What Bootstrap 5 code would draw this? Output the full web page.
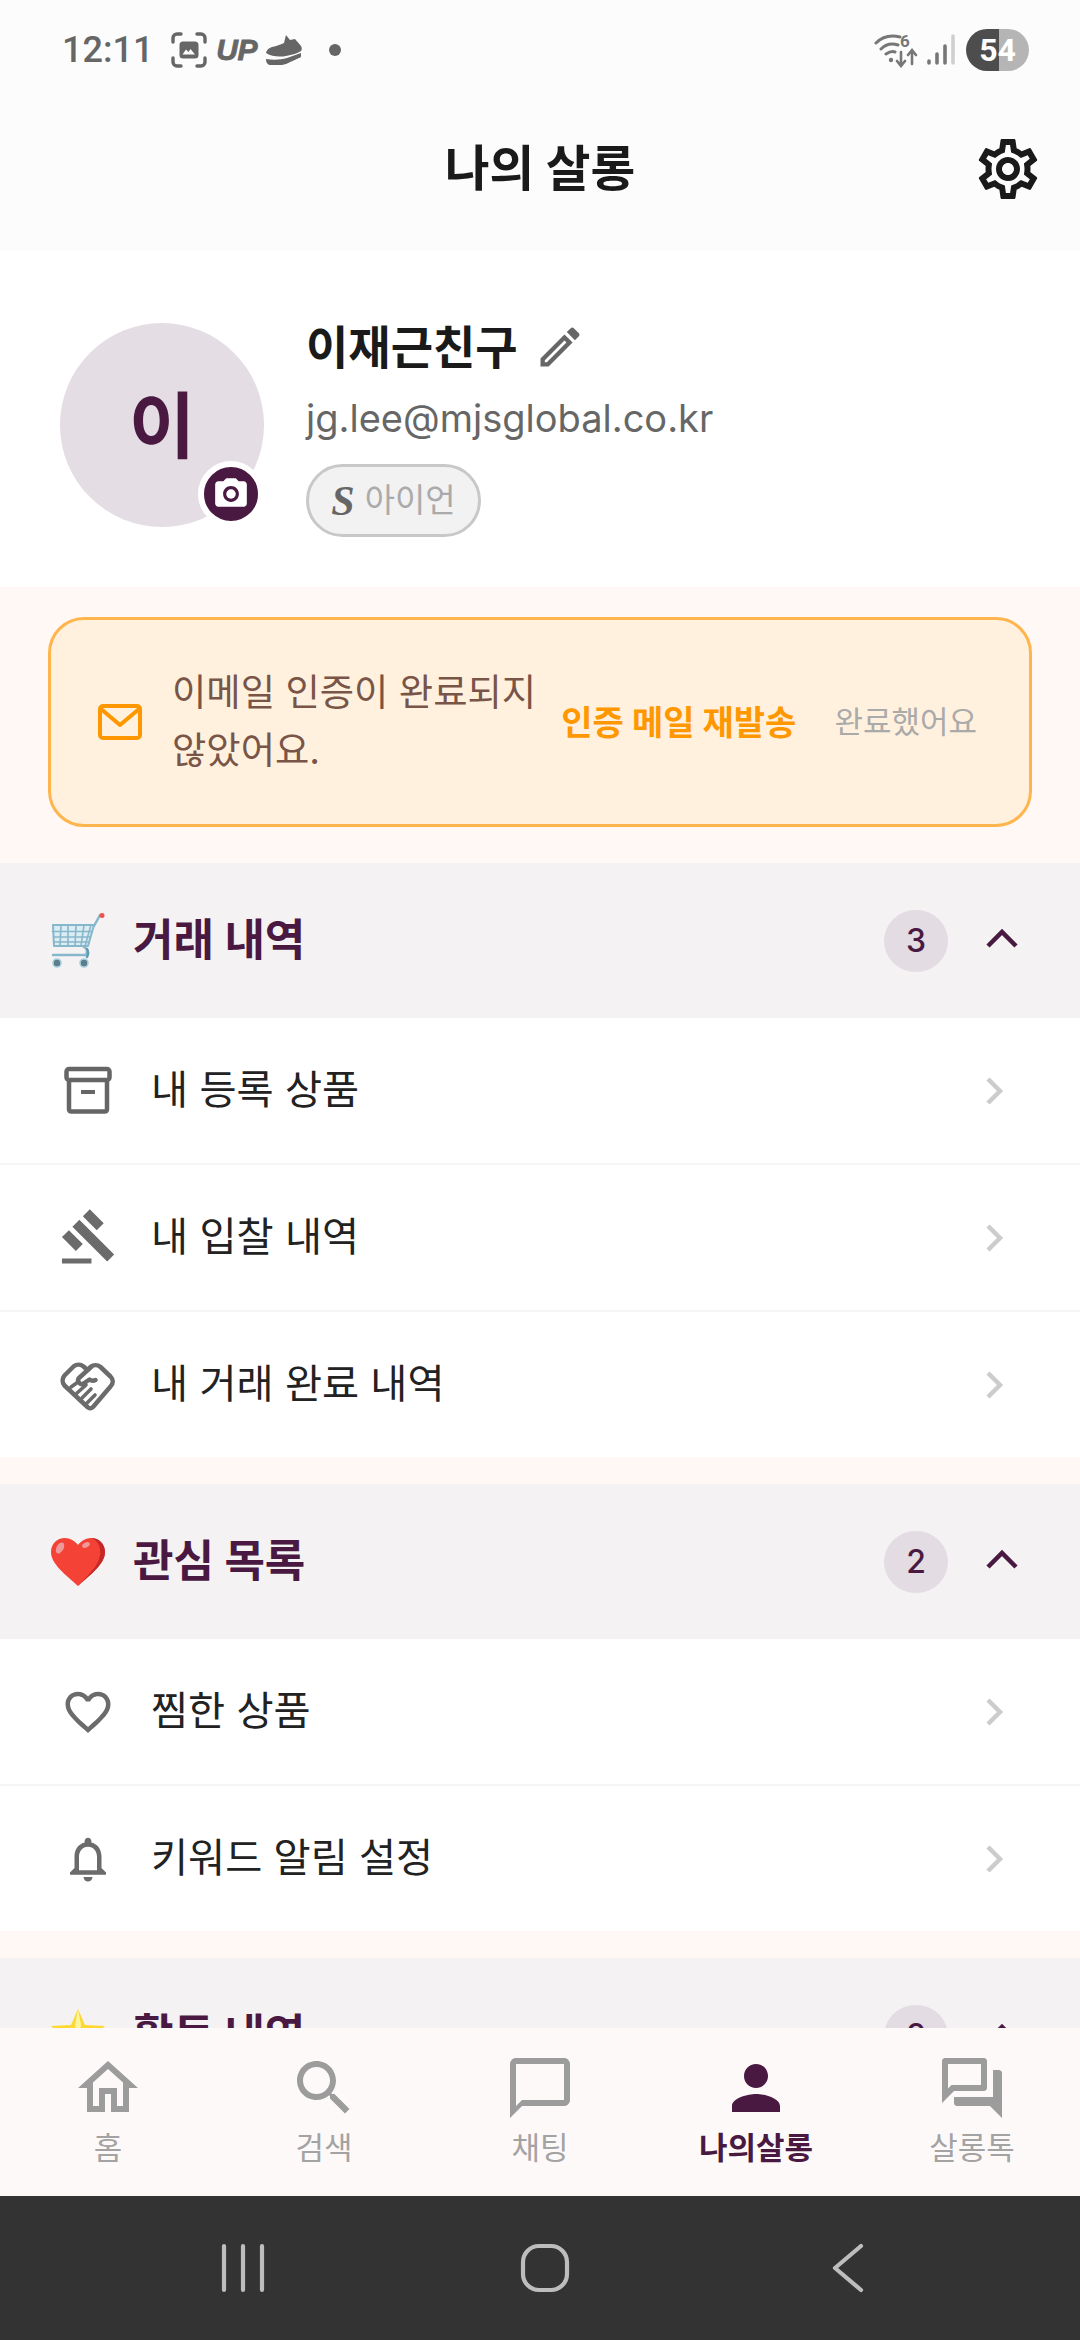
<!DOCTYPE html>
<html lang="ko">
<head>
<meta charset="utf-8">
<title>나의 살롱</title>
<link href="https://cdn.jsdelivr.net/npm/bootstrap@5.3.0/dist/css/bootstrap.min.css" rel="stylesheet">
<style>
html,body{margin:0;background:#fff}
body{font-family:Inter,"Noto Sans CJK KR",sans-serif;color:#1a1a1a}
.screen{width:1080px;height:2340px;overflow:hidden}
.top-area{background:#fcfcfc;height:250px;flex:none}
.status-row{height:100px;padding:0 51px 0 62px;color:#666}
.clock{font-family:Roboto,Inter,sans-serif;font-size:36px;font-weight:500;line-height:1}
.cap-ic{margin-left:18px}
.up-logo{font-family:"Liberation Sans",sans-serif;font-weight:700;font-style:italic;font-size:30px;line-height:1;margin-left:9px;width:41px;letter-spacing:-.5px;-webkit-text-stroke:.8px #666}
.shoe-ic{margin-left:9px}
.dot-ic{width:12px;height:12px;border-radius:50%;background:#666;margin-left:27px}
.batt{width:63px;height:42px;border-radius:21px;overflow:hidden;background:linear-gradient(90deg,#4d4d4d 0,#4d4d4d 33px,#b5b5b5 33px);color:#fff;font-size:32px;font-weight:700;line-height:42px;text-align:center;font-family:Roboto,Inter,sans-serif;margin-left:10px}
.app-row{height:150px;padding:0 36px 12px}
.app-title{font-size:48.600px;font-weight:700;color:#1a1a1a;margin:0;line-height:1.2;flex:1;text-align:center;padding-left:72px}
.profile{background:#fff;height:337px;padding:73px 0 0 60px;flex:none}
.avatar-wrap{width:204px;height:204px;position:relative;flex:none;margin-right:42px}
.avatar-c{width:204px;height:204px;border-radius:50%;background:#e4dde4;color:#4a1942;font-size:72px;font-weight:700;line-height:1;padding-top:2px}
.cam-btn{position:absolute;left:138px;top:138px;width:66px;height:66px;border-radius:50%;background:#4a1942;border:6px solid #fff}
.p-name{font-size:46px;font-weight:700;line-height:54px;margin-top:-3px;color:#1a1a1a}
.p-mail{font-size:38px;line-height:50px;color:#666;margin-top:19px}
.p-pill{width:175px;height:73px;border:3px solid #c8c8c8;border-radius:37px;background:#f2f2f2;margin-top:21px;color:#aaa;font-size:33px;line-height:1}
.pill-s{font-family:"Liberation Serif",serif;font-style:italic;font-weight:700;font-size:42px;color:#666;margin-right:10px}
.cream{background:#fff8f5}
.band{padding:30px 48px 36px;height:276px;flex:none}
.verify{height:210px;border:3px solid #ffb54d;border-radius:36px;background:#fff1de;padding:0 52px 0 47px}
.verify-msg{flex:1;font-size:37.300px;line-height:58px;color:#795548;margin-left:30px;width:360px}
.verify-send{font-size:34px;font-weight:700;color:#ff9800;white-space:nowrap;margin-right:38px}
.verify-done{font-size:31px;color:#aaa;white-space:nowrap}
.sec-head{height:155px;background:#f4f2f3;padding:0 62px 0 50px}
.sec-ic{width:56px;flex:none;margin-right:27px}
.sec-title{font-size:44px;font-weight:700;color:#4a1942;flex:1;line-height:1.2}
.sec-count{width:64px;height:62px;border-radius:50%;background:#e3dce3;color:#4a1942;font-size:32px;font-weight:500;margin-right:38px}
.caret-ic{margin-top:-5px}
.sec-list{--bs-list-group-border-color:#f7f5f5;--bs-list-group-border-width:2px;--bs-list-group-color:#222;--bs-list-group-bg:#fff}
.sec-list .list-group-item{height:147px;padding:0 75px 0 52px;font-size:40.300px;line-height:1.2;border-width:0 0 2px}
.sec-list .list-group-item:last-child{height:145px;border-bottom:0}
.row-ic{width:72px;flex:none;margin-right:27px}
.row-ic-small{width:54px;flex:none;margin:0 36px 0 9px}
.row-label{flex:1}
.gap-strip{height:27px}
.clipper{flex:1 1 0;min-height:0;overflow:hidden}
.tabbar{height:168px;background:#fef9f9;flex:none;padding-top:24px}
.tab-item{width:216px;color:#a3a3a3;font-size:31px;line-height:48px;text-decoration:none}
.tab-item svg{display:block}
.tab-item.on{color:#4a1942;font-weight:700}
.sysnav{height:144px;background:#333;flex:none;gap:242px;padding-left:10px}
</style>
</head>
<body>
<div class="screen d-flex flex-column">
  <header class="top-area">
    <div class="status-row d-flex align-items-center">
      <span class="clock">12:11</span>
      <svg class="cap-ic" width="36" height="36" viewBox="0 0 36 36" fill="none" stroke="#666" stroke-width="3.400" stroke-linecap="round"><path d="M2 10V6a4 4 0 0 1 4-4h4M26 2h4a4 4 0 0 1 4 4v4M34 26v4a4 4 0 0 1-4 4h-4M10 34H6a4 4 0 0 1-4-4v-4"/><rect x="8.500" y="9.500" width="19" height="17" rx="3.500" fill="#666" stroke="none"/><path d="M11.500 22.500l3.500-5 2.500 2.500 2-3 4.500 5.500z" fill="#fcfcfc" stroke="none"/></svg>
      <span class="up-logo">UP</span>
      <svg class="shoe-ic" width="36" height="32" viewBox="0 0 36 32" fill="#666"><path d="M0 19c1-5 6-6 10-7 3-1 6-2 8-3l2-8 4 5 5-1 6 7c1 2 1 4 0 5-3 2-9 4-15 5-6 1-14 1-20-3z"/><path d="M0 25c7 1 14 1 21-1l14-5v3c0 1-1 2-2 2l-13 6c-3 1-5 1-8 1H5c-3 0-5-2-5-6z"/></svg>
      <span class="dot-ic"></span>
      <span class="flex-grow-1"></span>
      <svg width="44" height="36" viewBox="0 0 44 36" fill="none" stroke="#777" stroke-width="3" stroke-linecap="round"><path d="M2 11C9 4 18 3 26 5M7 17c5-5 11-6 17-4M12 22c3-2 6-3 9-2"/><circle cx="17" cy="28" r="2.200" fill="#777" stroke="none"/><text x="26" y="15" font-family="Roboto,sans-serif" font-size="17" font-weight="700" fill="#777" stroke="none">6</text><path d="M27 20v13m-4-4l4 5 4-5M38 32V19m-4 4l4-5 4 5" stroke-width="2.600"/></svg>
      <svg class="ms-2" width="30" height="36" viewBox="0 0 30 36" fill="none" stroke-width="3.600" stroke-linecap="round"><path d="M3 31v-2M11 31v-9M19 31V14" stroke="#777"/><path d="M27 31V4" stroke="#cfcfcf"/></svg>
      <div class="batt">54</div>
    </div>
    <div class="app-row d-flex align-items-center">
      <h1 class="app-title">나의 살롱</h1>
      <svg width="72" height="72" viewBox="0 0 24 24" fill="#1a1a1a"><path d="M19.43 12.98c.04-.32.07-.64.07-.98 0-.34-.03-.66-.07-.98l2.11-1.65c.19-.15.24-.42.12-.64l-2-3.46c-.12-.22-.39-.3-.61-.22l-2.49 1c-.52-.4-1.08-.73-1.69-.98l-.38-2.65C14.46 2.18 14.25 2 14 2h-4c-.25 0-.46.18-.49.42l-.38 2.65c-.61.25-1.17.59-1.69.98l-2.49-1c-.23-.09-.49 0-.61.22l-2 3.46c-.13.22-.07.49.12.64l2.11 1.65c-.04.32-.07.65-.07.98 0 .33.03.66.07.98l-2.11 1.65c-.19.15-.24.42-.12.64l2 3.46c.12.22.39.3.61.22l2.49-1c.52.4 1.08.73 1.69.98l.38 2.65c.03.24.24.42.49.42h4c.25 0 .46-.18.49-.42l.38-2.65c.61-.25 1.17-.59 1.69-.98l2.49 1c.23.09.49 0 .61-.22l2-3.46c.12-.22.07-.49-.12-.64l-2.11-1.65zm-1.98-1.71c.04.31.05.52.05.73 0 .21-.02.43-.05.73l-.14 1.13.89.7 1.08.84-.7 1.21-1.27-.51-1.04-.42-.9.68c-.43.32-.84.56-1.25.73l-1.06.43-.16 1.13-.2 1.35h-1.4l-.19-1.35-.16-1.13-1.06-.43c-.43-.18-.83-.41-1.23-.71l-.91-.7-1.06.43-1.27.51-.7-1.21 1.08-.84.89-.7-.14-1.13c-.03-.31-.05-.54-.05-.74s.02-.43.05-.73l.14-1.13-.89-.7-1.08-.84.7-1.21 1.27.51 1.04.42.9-.68c.43-.32.84-.56 1.25-.73l1.06-.43.16-1.13.2-1.35h1.39l.19 1.35.16 1.13 1.06.43c.43.18.83.41 1.23.71l.91.7 1.06-.43 1.27-.51.7 1.21-1.07.85-.89.7.14 1.13zM12 8c-2.21 0-4 1.79-4 4s1.79 4 4 4 4-1.79 4-4-1.79-4-4-4zm0 6c-1.1 0-2-.9-2-2s.9-2 2-2 2 .9 2 2-.9 2-2 2z"/></svg>
    </div>
  </header>

  <main class="clipper">
    <section class="profile d-flex">
      <div class="avatar-wrap">
        <div class="avatar-c d-flex align-items-center justify-content-center">이</div>
        <div class="cam-btn d-flex align-items-center justify-content-center">
          <svg width="38" height="38" viewBox="0 0 24 24" fill="#fff"><path d="M9 2L7.170 4H4c-1.100 0-2 .9-2 2v12c0 1.100.9 2 2 2h16c1.100 0 2-.9 2-2V6c0-1.100-.9-2-2-2h-3.170L15 2H9zm3 15c-2.760 0-5-2.240-5-5s2.240-5 5-5 5 2.240 5 5-2.240 5-5 5z"/><circle cx="12" cy="12" r="3"/></svg>
        </div>
      </div>
      <div>
        <div class="p-name d-flex align-items-center">이재근친구<svg class="ms-3" width="52" height="52" viewBox="0 0 24 24" fill="#666"><path d="M3 17.250V21h3.750L17.810 9.940l-3.750-3.750L3 17.250zM5.920 19H5v-.92l9.060-9.060.92.92L5.920 19zM20.710 7.040c.39-.39.39-1.020 0-1.410l-2.340-2.340c-.39-.39-1.020-.39-1.410 0l-1.830 1.830 3.750 3.750 1.830-1.830z"/></svg></div>
        <div class="p-mail">jg.lee@mjsglobal.co.kr</div>
        <div class="p-pill d-flex align-items-center justify-content-center"><span class="pill-s">S</span>아이언</div>
      </div>
    </section>

    <div class="band cream">
      <div class="verify d-flex align-items-center">
        <svg width="44" height="36" viewBox="0 0 44 36" fill="none" stroke="#ff9800" stroke-width="4" stroke-linejoin="round"><rect x="2" y="2" width="40" height="32" rx="3"/><path d="M3 5l19 16L41 5"/></svg>
        <div class="verify-msg">이메일 인증이 완료되지<br>않았어요.</div>
        <span class="verify-send">인증 메일 재발송</span>
        <span class="verify-done">완료했어요</span>
      </div>
    </div>

    <section>
      <div class="sec-head d-flex align-items-center">
        <div class="sec-ic">
          <svg width="56" height="56" viewBox="0 0 56 56" fill="none" stroke="#86b7cb" stroke-width="1.600" stroke-linecap="round" stroke-linejoin="round"><path d="M3 12h41l-6 21H4z" fill="#dcecf3" stroke-width="2"/><path d="M2.500 18.500h39M3.500 24h36M3.800 29h34M11 12l-1 21M18 12v21M26 12l-1 21M34 12l-3 21M41 12l-6 21"/><path d="M44 13l6-11h3" stroke-width="2.400"/><path d="M34 34c4 2 3 6 2 8H3" stroke-width="2.400"/><path d="M37 36c2 3 1 6 0 8" stroke="#5f9db5" stroke-width="2.400"/><circle cx="7" cy="50" r="4" fill="#5f7d88" stroke="#a7cfdf"/><circle cx="34" cy="50" r="4" fill="#5f7d88" stroke="#a7cfdf"/><circle cx="52" cy="2.500" r="2.500" fill="#ef5350" stroke="none"/></svg>
        </div>
        <div class="sec-title">거래 내역</div>
        <span class="sec-count d-flex align-items-center justify-content-center">3</span>
        <svg class="caret-ic" width="32" height="20" viewBox="0 0 32 20" fill="none" stroke="#4a1942" stroke-width="4.500"><path d="M2 18L16 4l14 14"/></svg>
      </div>
      <div class="list-group list-group-flush sec-list">
        <a href="#" class="list-group-item d-flex align-items-center">
          <svg class="row-ic" width="72" height="72" viewBox="0 0 72 72" fill="none" stroke="#666" stroke-width="4.500" stroke-linejoin="round"><rect x="14.500" y="14" width="43" height="11" rx="2.500"/><path d="M17 25v29c0 1.500 1 2.500 2.500 2.500h33c1.500 0 2.500-1 2.500-2.500V25"/><path d="M29 37h14" stroke-width="4"/></svg>
          <span class="row-label">내 등록 상품</span>
          <svg width="20" height="30" viewBox="0 0 20 30" fill="none" stroke="#ccc" stroke-width="4.500"><path d="M3 3l12 12L3 27"/></svg>
        </a>
        <a href="#" class="list-group-item d-flex align-items-center">
          <svg class="row-ic" width="72" height="72" viewBox="0 0 24 24" fill="#6b6b6b"><path d="M1 21h12v2H1v-2zM5.245 8.070l2.830-2.827 14.140 14.142-2.828 2.828L5.245 8.070zM12.317 1l5.657 5.656-2.830 2.830-5.654-5.660L12.317 1zM3.825 9.485l5.657 5.657-2.828 2.828-5.657-5.657 2.828-2.828z" transform="translate(2.500 1.600) scale(.82)"/></svg>
          <span class="row-label">내 입찰 내역</span>
          <svg width="20" height="30" viewBox="0 0 20 30" fill="none" stroke="#ccc" stroke-width="4.500"><path d="M3 3l12 12L3 27"/></svg>
        </a>
        <a href="#" class="list-group-item d-flex align-items-center">
          <svg class="row-ic" width="72" height="72" viewBox="0 0 72 72" fill="none" stroke="#6b6b6b" stroke-width="4.500" stroke-linecap="round" stroke-linejoin="round"><path d="M36 58.500L12.500 36.500c-2.500-3-2.500-7 0-10l9-9c3-2.500 7-2.500 10 0l4 3.500 3-3c3-2.500 7-2.500 10 0l10 9.500c3 3 3 7 0 10L41 58c-1.500 1.500-3.500 1.500-5 .5z"/><path d="M39 18L27 29c-2.500 3 1 7.500 4.500 5.500l6-4c2 1.500 4 1.500 6 .5"/><path d="M19 38l7-5M25 44l9-8M30 49l9-9M35 54l8-8" stroke-width="3.600"/></svg>
          <span class="row-label">내 거래 완료 내역</span>
          <svg width="20" height="30" viewBox="0 0 20 30" fill="none" stroke="#ccc" stroke-width="4.500"><path d="M3 3l12 12L3 27"/></svg>
        </a>
      </div>
    </section>
    <div class="gap-strip cream"></div>

    <section>
      <div class="sec-head d-flex align-items-center">
        <div class="sec-ic">
          <svg width="56" height="50" viewBox="0 0 56 50"><path d="M28 49C15 37 1 27 1 15 1 7 7 1 15 1c5 0 10 3 13 7 3-4 8-7 13-7 8 0 14 6 14 14 0 12-14 22-27 34z" fill="#f44336"/><path d="M41 1c8 0 14 6 14 14 0 12-14 22-27 34C40 36 52 26 50 12c-1-6-5-10-9-11z" fill="#c62828"/><ellipse cx="10" cy="11" rx="3.500" ry="6" transform="rotate(30 10 11)" fill="#ef9a9a"/><ellipse cx="36" cy="8" rx="4" ry="2.500" transform="rotate(-25 36 8)" fill="#ef9a9a"/></svg>
        </div>
        <div class="sec-title">관심 목록</div>
        <span class="sec-count d-flex align-items-center justify-content-center">2</span>
        <svg class="caret-ic" width="32" height="20" viewBox="0 0 32 20" fill="none" stroke="#4a1942" stroke-width="4.500"><path d="M2 18L16 4l14 14"/></svg>
      </div>
      <div class="list-group list-group-flush sec-list">
        <a href="#" class="list-group-item d-flex align-items-center">
          <svg class="row-ic-small" width="54" height="54" viewBox="0 0 24 24" fill="#6b6b6b"><path d="M16.500 3c-1.740 0-3.410.81-4.500 2.090C10.910 3.810 9.240 3 7.500 3 4.420 3 2 5.420 2 8.500c0 3.780 3.400 6.860 8.550 11.540L12 21.350l1.450-1.320C18.600 15.360 22 12.280 22 8.500 22 5.420 19.580 3 16.500 3zm-4.400 15.550l-.1.1-.1-.1C7.140 14.240 4 11.390 4 8.500 4 6.500 5.500 5 7.500 5c1.540 0 3.040.99 3.570 2.360h1.870C13.460 5.990 14.960 5 16.500 5c2 0 3.500 1.500 3.500 3.500 0 2.890-3.140 5.740-7.900 10.050z"/></svg>
          <span class="row-label">찜한 상품</span>
          <svg width="20" height="30" viewBox="0 0 20 30" fill="none" stroke="#ccc" stroke-width="4.500"><path d="M3 3l12 12L3 27"/></svg>
        </a>
        <a href="#" class="list-group-item d-flex align-items-center">
          <svg class="row-ic-small" width="54" height="54" viewBox="0 0 24 24" fill="#6b6b6b"><path d="M12 22c1.100 0 2-.9 2-2h-4c0 1.100.9 2 2 2zm6-6v-5c0-3.070-1.630-5.640-4.500-6.320V4c0-.83-.67-1.500-1.500-1.500s-1.500.67-1.500 1.500v.68C7.640 5.360 6 7.920 6 11v5l-2 2v1h16v-1l-2-2zm-2 1H8v-6c0-2.480 1.510-4.500 4-4.500s4 2.020 4 4.500v6z"/></svg>
          <span class="row-label">키워드 알림 설정</span>
          <svg width="20" height="30" viewBox="0 0 20 30" fill="none" stroke="#ccc" stroke-width="4.500"><path d="M3 3l12 12L3 27"/></svg>
        </a>
      </div>
    </section>
    <div class="gap-strip cream"></div>

    <section>
      <div class="sec-head d-flex align-items-center">
        <div class="sec-ic">
          <svg width="56" height="54" viewBox="0 0 56 54"><path d="M28 0l7 16 20 1-15 14 5 21-17-11-17 11 5-21L1 17l20-1z" fill="#fdd835"/><path d="M28 0l3 16-3 14-3-14z" fill="#fff59d"/></svg>
        </div>
        <div class="sec-title">활동 내역</div>
        <span class="sec-count d-flex align-items-center justify-content-center">2</span>
        <svg class="caret-ic" width="32" height="20" viewBox="0 0 32 20" fill="none" stroke="#4a1942" stroke-width="4.500"><path d="M2 18L16 4l14 14"/></svg>
      </div>
    </section>
  </main>

  <nav class="tabbar d-flex">
    <a href="#" class="tab-item d-flex flex-column align-items-center">
      <svg width="72" height="72" viewBox="0 0 24 24" fill="#9c9c9c"><path d="M12 5.690l5 4.500V18h-2v-6H9v6H7v-7.810l5-4.500M12 3L2 12h3v8h6v-6h2v6h6v-8h3L12 3z"/></svg>
      <span>홈</span>
    </a>
    <a href="#" class="tab-item d-flex flex-column align-items-center">
      <svg width="72" height="72" viewBox="0 0 24 24" fill="#9c9c9c"><path d="M15.500 14h-.79l-.28-.27C15.410 12.590 16 11.110 16 9.500 16 5.910 13.090 3 9.500 3S3 5.910 3 9.500 5.910 16 9.500 16c1.610 0 3.090-.59 4.230-1.570l.27.28v.79l5 4.990L20.490 19l-4.990-5zm-6 0C7.010 14 5 11.990 5 9.500S7.010 5 9.500 5 14 7.010 14 9.500 11.990 14 9.500 14z"/></svg>
      <span>검색</span>
    </a>
    <a href="#" class="tab-item d-flex flex-column align-items-center">
      <svg width="72" height="72" viewBox="0 0 24 24" fill="#9c9c9c"><path d="M20 2H4c-1.100 0-2 .9-2 2v18l4-4h14c1.100 0 2-.9 2-2V4c0-1.100-.9-2-2-2zm0 14H6l-2 2V4h16v12z"/></svg>
      <span>채팅</span>
    </a>
    <a href="#" class="tab-item on d-flex flex-column align-items-center">
      <svg width="72" height="72" viewBox="0 0 24 24" fill="#4a1942"><path d="M12 12c2.210 0 4-1.790 4-4s-1.790-4-4-4-4 1.790-4 4 1.790 4 4 4zm0 2c-2.670 0-8 1.340-8 4v2h16v-2c0-2.660-5.330-4-8-4z"/></svg>
      <span>나의살롱</span>
    </a>
    <a href="#" class="tab-item d-flex flex-column align-items-center">
      <svg width="72" height="72" viewBox="0 0 24 24" fill="#9c9c9c"><path d="M15 4v7H5.170l-.59.59-.58.58V4h11m1-2H3c-.55 0-1 .45-1 1v14l4-4h10c.55 0 1-.45 1-1V3c0-.55-.45-1-1-1zm5 4h-2v9H6v2c0 .55.45 1 1 1h11l4 4V7c0-.55-.45-1-1-1z"/></svg>
      <span>살롱톡</span>
    </a>
  </nav>

  <div class="sysnav d-flex align-items-center justify-content-center">
    <svg width="60" height="50" viewBox="0 0 60 50" stroke="#bdbdbd" stroke-width="4.200" stroke-linecap="round"><path d="M11 3v44M30 3v44M49 3v44"/></svg>
    <svg width="60" height="50" viewBox="0 0 60 50" fill="none" stroke="#bdbdbd" stroke-width="4.200"><rect x="8" y="3" width="44" height="44" rx="16"/></svg>
    <svg width="60" height="50" viewBox="0 0 60 50" fill="none" stroke="#bdbdbd" stroke-width="4.200" stroke-linecap="round" stroke-linejoin="round"><path d="M44 3L18 25l26 22"/></svg>
  </div>
</div>
<script src="https://cdn.jsdelivr.net/npm/bootstrap@5.3.0/dist/js/bootstrap.bundle.min.js"></script>
</body>
</html>
